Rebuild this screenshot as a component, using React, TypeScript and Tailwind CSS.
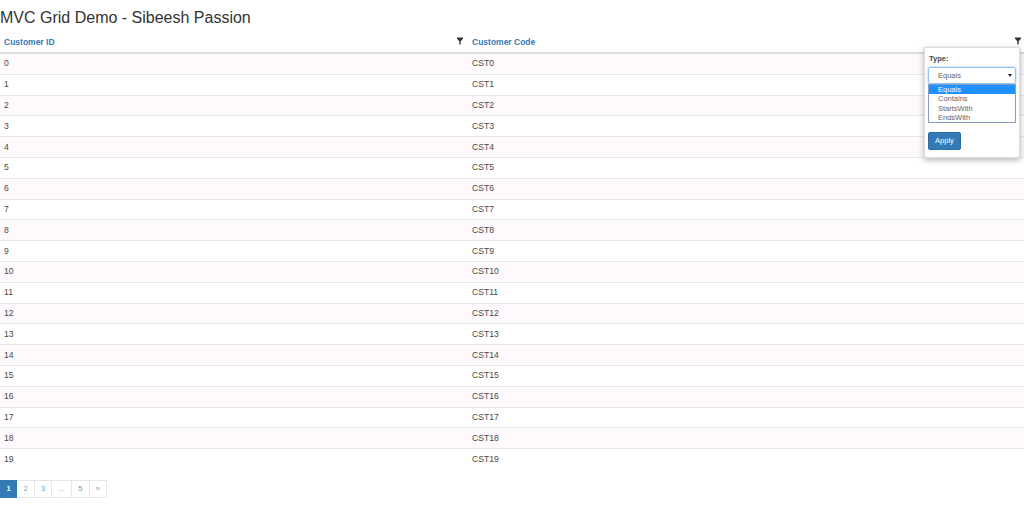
const rows = Array.from({ length: 20 }, (_, i) => i);

function FilterIcon({ className }: { className: string }) {
  return (
    <svg viewBox="0 0 7 8" className={className} fill="#333">
      <path d="M0 0h7v1.5L4.3 4.2V8H2.7V4.2L0 1.5z" />
    </svg>
  );
}

function PageLink({ label, active, wide }: { label: string; active?: boolean; wide?: boolean }) {
  if (active) {
    return (
      <a className="flex h-[18px] w-[17.4px] items-center justify-center border border-[#337ab7] bg-[#337ab7] font-bold text-white">
        {label}
      </a>
    );
  }
  return (
    <a
      className={
        wide
          ? "flex h-[18px] w-[20px] items-center justify-center border border-l-0 border-[#e6e6e6] text-[#aaa]"
          : "flex h-[18px] w-[17.4px] items-center justify-center border border-l-0 border-[#e6e6e6] text-[#6b9ccb]"
      }
    >
      {label}
    </a>
  );
}

export default function App() {
  return (
    <div className="relative h-[518px] w-[1024px] overflow-hidden bg-white font-['Liberation_Sans',Arial,sans-serif] text-[8.6px] text-[#484848]">
      <h1 className="h-[31px] pt-[9px] text-[16px] leading-[18px] font-normal text-[#333]">MVC Grid Demo - Sibeesh Passion</h1>

      <div className="flex h-[23px] border-b-2 border-[#ddd] pt-[1px] text-[8.5px] font-bold text-[#337ab7]">
        <div className="relative flex w-[468px] items-center pl-[4px]">
          Customer ID
          <FilterIcon className="absolute top-[5px] right-[5px] h-[8px] w-[6px]" />
        </div>
        <div className="relative flex flex-1 items-center pl-[4px]">
          Customer Code
          <FilterIcon className="absolute top-[5px] right-[3px] h-[8px] w-[6px]" />
        </div>
      </div>

      {rows.map((i) => (
        <div
          key={i}
          className={
            i === 19
              ? "flex h-[20.8px] items-center"
              : i % 2 === 0
                ? "flex h-[20.8px] items-center border-b border-[#e8e8e8] bg-[#fdf9fd]"
                : "flex h-[20.8px] items-center border-b border-[#e8e8e8]"
          }
        >
          <div className="w-[468px] pl-[4px]">{i}</div>
          <div className="pl-[4px]">CST{i}</div>
        </div>
      ))}

      <div className="mt-[10px] flex text-[7.5px]">
        <PageLink label="1" active />
        <PageLink label="2" />
        <PageLink label="3" />
        <PageLink label="..." wide />
        <PageLink label="5" />
        <PageLink label="»" />
      </div>

      {/* filter popup */}
      <div className="absolute top-[47px] left-[924px] h-[111px] w-[96px] border border-[#ddd] bg-white px-[3px] shadow-[0_2px_6px_rgba(0,0,0,0.3)]">
        <div className="mt-[6px] ml-[1px] text-[7.5px] leading-[9px] font-bold">Type:</div>
        <div className="relative mt-[4px] flex h-[17px] w-[88px] items-center rounded-[2px] border border-[#8fc1ee] pl-[9px] text-[7.5px] text-[#666] shadow-[0_0_3px_rgba(102,175,233,0.6)]">
          Equals
          <span className="absolute top-[6px] right-[3px] border-x-[2px] border-t-[3px] border-x-transparent border-t-[#222]" />
        </div>
        <div className="h-[39px] w-[88px] border border-[#8a9cc0] text-[7.5px] leading-[9.4px] text-[#666]">
          <div className="bg-[#1e90ff] pl-[9px] text-white">Equals</div>
          <div className="pl-[9px]">Contains</div>
          <div className="pl-[9px]">StartsWith</div>
          <div className="pl-[9px]">EndsWith</div>
        </div>
        <button className="mt-[9px] block h-[18px] w-[33px] rounded-[2px] border border-[#2e6da4] bg-[#337ab7] text-[7.5px] text-white">
          Apply
        </button>
      </div>
    </div>
  );
}
